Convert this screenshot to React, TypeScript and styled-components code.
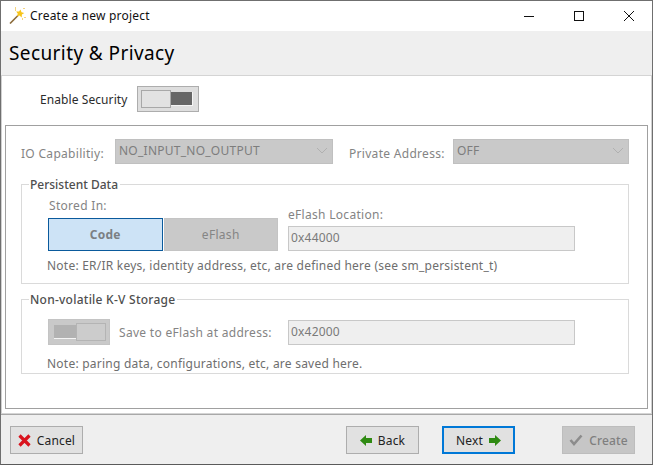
import React from 'react';
import styled, { createGlobalStyle } from 'styled-components';

const GlobalStyle = createGlobalStyle`
  html, body {
    margin: 0;
    padding: 0;
    background: #ffffff;
  }
  * {
    box-sizing: border-box;
  }
`;

const Window = styled.div`
  width: 653px;
  height: 465px;
  display: flex;
  flex-direction: column;
  border: 1px solid #6f6f6f;
  border-bottom-color: #5a5a5a;
  background: #fff;
  font-family: "Noto Sans", "Open Sans", sans-serif;
  font-size: 12px;
  color: #222;
  overflow: hidden;
`;

const TitleBar = styled.div`
  height: 30px;
  flex: none;
  display: flex;
  align-items: center;
  padding-left: 8px;
  padding-bottom: 1px;
  gap: 4px;
  background: #fff;
`;

const TitleText = styled.span`
  flex: 1;
  font-size: 12px;
  color: #111;
  letter-spacing: 0.2px;
`;

const WinButton = styled.div`
  width: 46px;
  height: 29px;
  display: flex;
  align-items: center;
  justify-content: center;
`;

const Header = styled.div`
  height: 44px;
  flex: none;
  display: flex;
  align-items: center;
  padding-left: 8px;
  padding-bottom: 1px;
  background: #efefef;
  font-size: 19px;
  color: #000;
  letter-spacing: 0.4px;
`;

const Body = styled.div`
  flex: 1;
  display: flex;
  flex-direction: column;
  border: 1px solid #d4d4d4;
  border-left-color: #d0d0d0;
  border-right-color: #d0d0d0;
  padding: 10px 3px 4px 3px;
`;

const EnableRow = styled.div`
  height: 26px;
  display: flex;
  align-items: center;
  padding-left: 35px;
  gap: 10px;
  margin-bottom: 13px;
  flex: none;
`;

const Label = styled.span<{ $disabled?: boolean }>`
  color: ${p => (p.$disabled ? '#848484' : '#2b2b2b')};
  letter-spacing: ${p => (p.$disabled ? '0.3px' : '0.08px')};
  white-space: nowrap;
`;

const Toggle = styled.div<{ $on?: boolean; $disabled?: boolean }>`
  width: 62px;
  height: 26px;
  flex: none;
  display: flex;
  flex-direction: ${p => (p.$on ? 'row' : 'row-reverse')};
  align-items: center;
  padding: ${p => (p.$on ? '0 5px 0 3px' : '0 3px 0 5px')};
  background: ${p => (p.$disabled ? '#c9c9c9' : '#dedede')};
  border: 1px solid ${p => (p.$disabled ? '#c4c4c4' : '#adadad')};
`;

const ToggleKnob = styled.div<{ $disabled?: boolean }>`
  width: 30px;
  height: 18px;
  flex: none;
  background: ${p => (p.$disabled ? '#cccccc' : '#e2e2e2')};
  border: 1px solid ${p => (p.$disabled ? '#b4b4b4' : '#a8a8a8')};
`;

const ToggleTrack = styled.div<{ $disabled?: boolean }>`
  flex: 1;
  height: 14px;
  background: ${p => (p.$disabled ? '#b2b2b2' : '#666666')};
  border-bottom: 1px solid #f4f4f4;
  border-right: ${p => (p.$disabled ? 'none' : '1px solid #f4f4f4')};
`;

const Frame = styled.div`
  flex: 1;
  display: flex;
  flex-direction: column;
  border: 1px solid #a0a0a0;
  padding: 13px 17px 0 15px;
`;

const CapRow = styled.div`
  display: flex;
  align-items: center;
  height: 25px;
  margin-bottom: 12px;
`;

const CapLabel = styled(Label)<{ $width: number; $left?: number }>`
  width: ${p => p.$width}px;
  margin-left: ${p => p.$left ?? 0}px;
  flex: none;
  padding-top: 3px;
`;

const Select = styled.div<{ $width: number }>`
  width: ${p => p.$width}px;
  height: 25px;
  flex: none;
  display: flex;
  align-items: center;
  justify-content: space-between;
  padding: 0 4px 2px 3px;
  background: #c9c9c9;
  border: 1px solid #c0c0c0;
  color: #7d7d7d;
  letter-spacing: 0.25px;
`;

const Group = styled.fieldset<{ $height: number; $top?: number }>`
  margin: ${p => p.$top ?? 0}px 0 0 0;
  padding: 0 0 0 27px;
  width: 608px;
  height: ${p => p.$height}px;
  border: 1px solid #dadada;
  min-width: 0;
`;

const GroupTitle = styled.legend<{ $spacing?: number }>`
  margin-left: -20px;
  padding: 0 2px 0 1px;
  font-weight: 500;
  color: #4e4e4e;
  line-height: 17px;
  letter-spacing: ${p => p.$spacing ?? 0}px;
`;

const StoredRow = styled.div`
  display: flex;
  align-items: flex-start;
  gap: 10px;
  margin-left: -1px;
  padding-top: 5px;
`;

const StoredCol = styled.div`
  display: flex;
  flex-direction: column;
  width: 230px;
`;

const StoredLabel = styled(Label)`
  padding-left: 1px;
  line-height: 17px;
  margin-bottom: 4px;
  margin-top: -1px;
`;

const Segments = styled.div`
  display: flex;
  gap: 1px;
`;

const Segment = styled.div<{ $active?: boolean }>`
  width: 115px;
  height: 33px;
  display: flex;
  align-items: center;
  justify-content: center;
  font-weight: ${p => (p.$active ? 700 : 400)};
  background: ${p => (p.$active ? '#cde3f6' : '#c9c9c9')};
  border: 1px solid ${p => (p.$active ? '#0a5a9c' : '#c4c4c4')};
  color: ${p => (p.$active ? '#7b7f83' : '#858585')};
  letter-spacing: 0.3px;
`;

const LocationCol = styled.div`
  display: flex;
  flex-direction: column;
  padding-top: 8px;
`;

const LocationLabel = styled(Label)`
  line-height: 17px;
  margin-bottom: 3px;
`;

const AddressBox = styled.div`
  width: 287px;
  height: 25px;
  flex: none;
  display: flex;
  align-items: center;
  padding: 0 0 2px 2px;
  background: #efefef;
  border: 1px solid #c8c8c8;
  color: #7a7a7a;
  letter-spacing: 0.2px;
`;

const Note = styled.div<{ $top: number }>`
  margin: ${p => p.$top}px 0 0 -2px;
  color: #6e6e6e;
  line-height: 17px;
  letter-spacing: 0.23px;
`;

const StorageRow = styled.div`
  display: flex;
  align-items: center;
  height: 26px;
  margin: 11px 0 0 -1px;
`;

const SaveLabel = styled(Label)`
  margin-left: 9px;
  width: 169px;
  flex: none;
`;

const Footer = styled.div`
  height: 50px;
  flex: none;
  display: flex;
  align-items: flex-start;
  padding: 11px 0 0 9px;
  background: #efefef;
  border-top: 1px solid #a8a8a8;
`;

const FootButton = styled.div<{ $focus?: boolean; $disabled?: boolean; $gapAfter?: number }>`
  width: 73px;
  height: 28px;
  flex: none;
  display: flex;
  align-items: center;
  justify-content: center;
  gap: 6px;
  margin-right: ${p => p.$gapAfter ?? 0}px;
  background: ${p => (p.$disabled ? '#c6c6c6' : '#e1e1e1')};
  border: ${p => (p.$focus ? '2px solid #0078d7' : `1px solid ${p.$disabled ? '#bdbdbd' : '#adadad'}`)};
  color: ${p => (p.$disabled ? '#7f7f7f' : '#222')};
  font-weight: ${p => (p.$disabled ? 500 : 400)};
  letter-spacing: 0.15px;
`;

const WandIcon = () => (
  <svg width="17" height="17" viewBox="0 0 17 17">
    <path d="M1 16.5 L9 8.5" stroke="#8a6a3a" strokeWidth="1.6" />
    <path d="M11.5 2.5 l1 2.7 2.8.8-2.4 1.6-.2 2.8-2.2-1.8-2.7.8 1-2.7-1.6-2.3 2.8.2z" fill="#f7c41a" />
    <path d="M6 3h1M15 1v1M16 10v1M13 12h1M6 1h1" stroke="#e8a800" strokeWidth="1" />
  </svg>
);

const ChevronIcon = () => (
  <svg width="12" height="7" viewBox="0 0 12 7">
    <path d="M1 1 L6 6 L11 1" fill="none" stroke="#b0b0b0" strokeWidth="1" />
  </svg>
);

const CrossIcon = () => (
  <svg width="13" height="13" viewBox="0 0 13 13">
    <path d="M1.5 1.5 L11.5 11.5 M11.5 1.5 L1.5 11.5" stroke="#d9131e" strokeWidth="3.2" />
  </svg>
);

const ArrowIcon = ({ dir }: { dir: 'left' | 'right' }) => (
  <svg width="12" height="11" viewBox="0 0 12 11">
    <path
      d={dir === 'left' ? 'M0 5.5 L6 0 V3 H12 V8 H6 V11 Z' : 'M12 5.5 L6 0 V3 H0 V8 H6 V11 Z'}
      fill="#2f8a12"
    />
  </svg>
);

const CheckIcon = () => (
  <svg width="14" height="12" viewBox="0 0 14 12">
    <path d="M1.5 6 L5 10 L12.5 1.5" fill="none" stroke="#8c8c8c" strokeWidth="2.6" />
  </svg>
);

const SecurityPage: React.FC = () => (
  <Window>
    <GlobalStyle />
    <TitleBar>
      <WandIcon />
      <TitleText>Create a new project</TitleText>
      <WinButton>
        <svg width="10" height="10" viewBox="0 0 10 10">
          <path d="M0 5.5H10" stroke="#111" strokeWidth="1" />
        </svg>
      </WinButton>
      <WinButton>
        <svg width="10" height="10" viewBox="0 0 10 10">
          <rect x="0.5" y="0.5" width="9" height="9" fill="none" stroke="#111" strokeWidth="1" />
        </svg>
      </WinButton>
      <WinButton>
        <svg width="10" height="10" viewBox="0 0 10 10">
          <path d="M0 0L10 10M10 0L0 10" stroke="#111" strokeWidth="1" />
        </svg>
      </WinButton>
    </TitleBar>
    <Header>Security &amp; Privacy</Header>
    <Body>
      <EnableRow>
        <Label>Enable Security</Label>
        <Toggle $on>
          <ToggleKnob />
          <ToggleTrack />
        </Toggle>
      </EnableRow>
      <Frame>
        <CapRow>
          <CapLabel $disabled $width={94}>IO Capabilitiy:</CapLabel>
          <Select $width={218}>
            NO_INPUT_NO_OUTPUT
            <ChevronIcon />
          </Select>
          <CapLabel $disabled $width={104} $left={16}>Private Address:</CapLabel>
          <Select $width={176}>
            OFF
            <ChevronIcon />
          </Select>
        </CapRow>
        <Group $height={108}>
          <GroupTitle>Persistent Data</GroupTitle>
          <StoredRow>
            <StoredCol>
              <StoredLabel $disabled>Stored In:</StoredLabel>
              <Segments>
                <Segment $active>Code</Segment>
                <Segment>eFlash</Segment>
              </Segments>
            </StoredCol>
            <LocationCol>
              <LocationLabel $disabled>eFlash Location:</LocationLabel>
              <AddressBox>0x44000</AddressBox>
            </LocationCol>
          </StoredRow>
          <Note $top={6}>Note: ER/IR keys, identity address, etc, are defined here (see sm_persistent_t)</Note>
        </Group>
        <Group $height={83} $top={7}>
          <GroupTitle $spacing={0.25}>Non-volatile K-V Storage</GroupTitle>
          <StorageRow>
            <Toggle $disabled>
              <ToggleKnob $disabled />
              <ToggleTrack $disabled />
            </Toggle>
            <SaveLabel $disabled>Save to eFlash at address:</SaveLabel>
            <AddressBox>0x42000</AddressBox>
          </StorageRow>
          <Note $top={10}>Note: paring data, configurations, etc, are saved here.</Note>
        </Group>
      </Frame>
    </Body>
    <Footer>
      <FootButton $gapAfter={263}>
        <CrossIcon />
        Cancel
      </FootButton>
      <FootButton $gapAfter={23}>
        <ArrowIcon dir="left" />
        Back
      </FootButton>
      <FootButton $focus $gapAfter={47}>
        Next
        <ArrowIcon dir="right" />
      </FootButton>
      <FootButton $disabled>
        <CheckIcon />
        Create
      </FootButton>
    </Footer>
  </Window>
);

export default function App() {
  return <SecurityPage />;
}
